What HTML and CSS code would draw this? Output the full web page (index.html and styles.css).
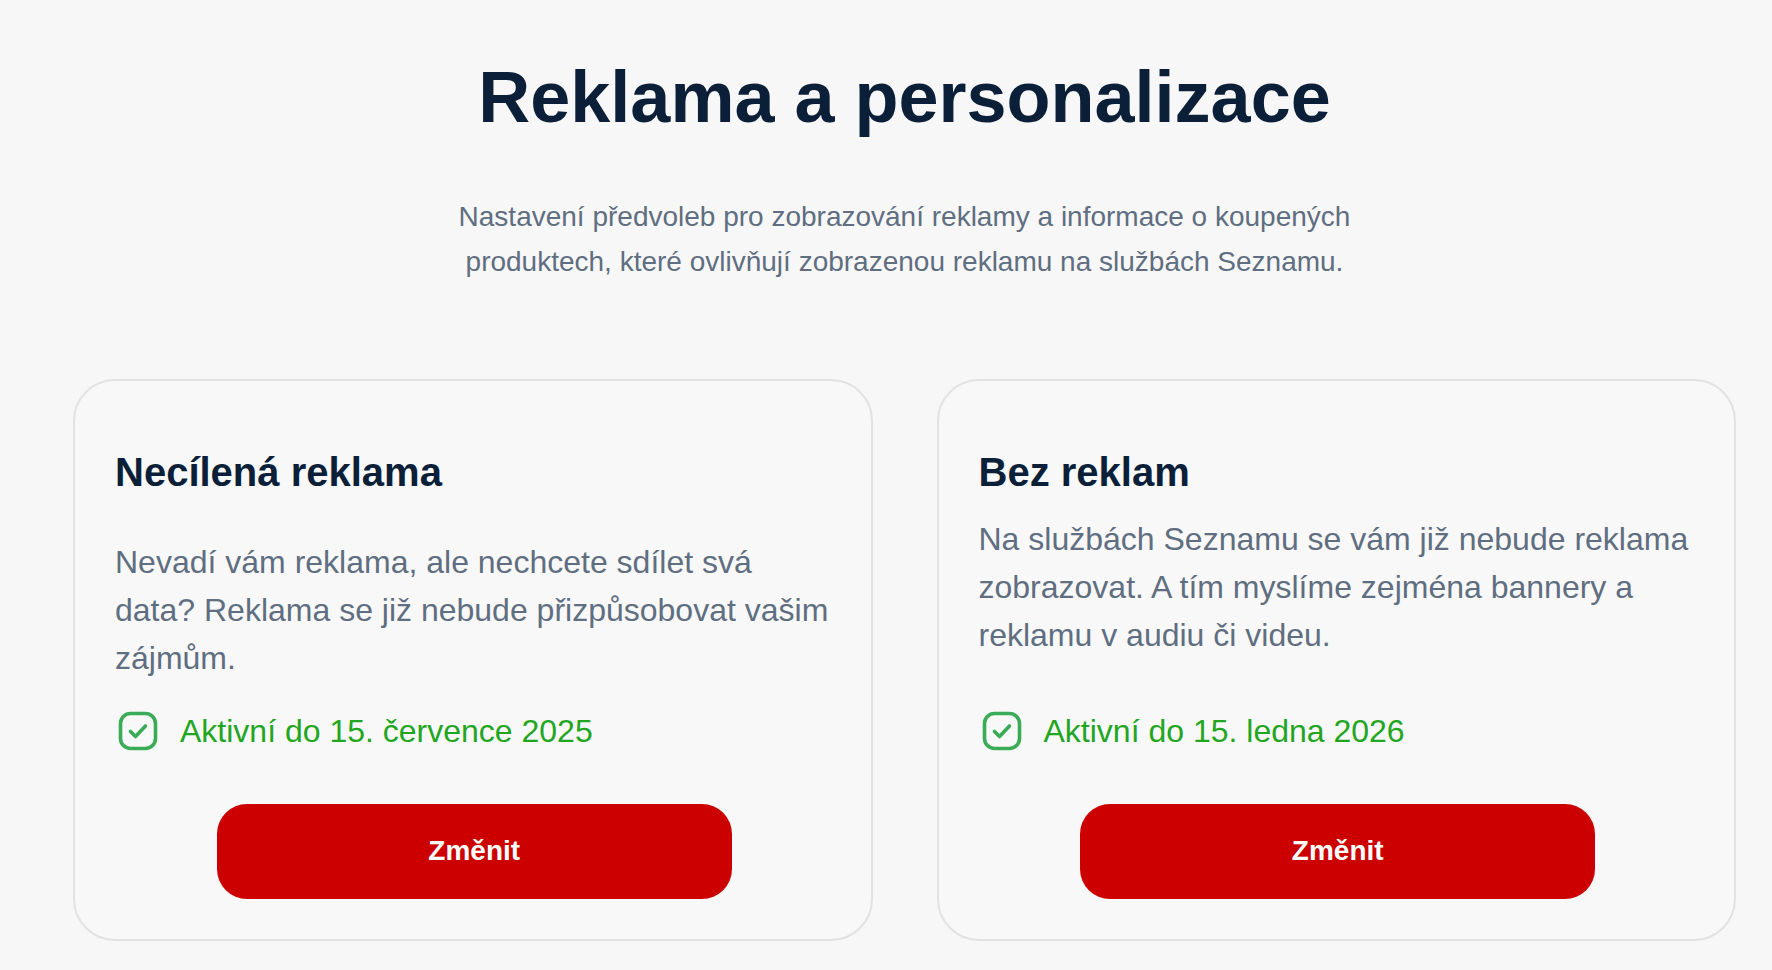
FILE: index.html
```html
<!DOCTYPE html>
<html lang="cs">
<head>
    <meta charset="UTF-8">
    <meta name="viewport" content="width=device-width, initial-scale=1.0">
    <title>Reklama a personalizace</title>
    <link rel="stylesheet" href="styles.css">
</head>
<body>
    <div class="page">
        <h1>Reklama a personalizace</h1>
        <p class="intro">Nastavení předvoleb pro zobrazování reklamy a informace o koupených produktech, které ovlivňují zobrazenou reklamu na službách Seznamu.</p>

        <div class="cards">
            <div class="card">
                <h2>Necílená reklama</h2>
                <p class="card-text">Nevadí vám reklama, ale nechcete sdílet svá data? Reklama se již nebude přizpůsobovat vašim zájmům.</p>
                <div class="status">
                    <svg class="status-icon" viewBox="0 0 40 40" width="40" height="40">
                        <rect x="2.5" y="2.5" width="35" height="35" rx="10" fill="none" stroke="#3aab56" stroke-width="3.6"/>
                        <path d="M12.5 20.5 L17.5 25.5 L27.5 15" fill="none" stroke="#3aab56" stroke-width="3.6" stroke-linecap="round" stroke-linejoin="round"/>
                    </svg>
                    <span>Aktivní do 15. července 2025</span>
                </div>
                <button type="button">Změnit</button>
            </div>

            <div class="card">
                <h2>Bez reklam</h2>
                <p class="card-text tight">Na službách Seznamu se vám již nebude reklama zobrazovat. A tím myslíme zejména bannery a reklamu v audiu či videu.</p>
                <div class="status">
                    <svg class="status-icon" viewBox="0 0 40 40" width="40" height="40">
                        <rect x="2.5" y="2.5" width="35" height="35" rx="10" fill="none" stroke="#3aab56" stroke-width="3.6"/>
                        <path d="M12.5 20.5 L17.5 25.5 L27.5 15" fill="none" stroke="#3aab56" stroke-width="3.6" stroke-linecap="round" stroke-linejoin="round"/>
                    </svg>
                    <span>Aktivní do 15. ledna 2026</span>
                </div>
                <button type="button">Změnit</button>
            </div>
        </div>
    </div>
</body>
</html>
```

FILE: styles.css
```css
body {
    margin: 0;
    font-family: "Liberation Sans", Arial, sans-serif;
    background-color: #f7f7f7;
}

.page {
    padding: 54px 36px 0 73px;
}

h1 {
    margin: 0;
    text-align: center;
    font-size: 72px;
    line-height: 1.2;
    font-weight: bold;
    color: #0b1f38;
}

.intro {
    max-width: 920px;
    margin: 55px auto 0;
    text-align: center;
    font-size: 28px;
    line-height: 1.6;
    color: #5f6e80;
}

.cards {
    display: grid;
    grid-template-columns: 1fr 1fr;
    gap: 64px;
    margin-top: 94px;
}

.card {
    display: flex;
    flex-direction: column;
    padding: 67px 37px 40px 40px;
    border: 2px solid #e2e2e2;
    border-radius: 42px;
    background-color: #f8f8f8;
}

h2 {
    margin: 0;
    font-size: 40px;
    line-height: 48px;
    font-weight: bold;
    color: #0b1f38;
}

.card-text {
    margin: 42px 0 25px;
    font-size: 32px;
    line-height: 48px;
    color: #5f6e80;
}

.card-text.tight {
    margin: 19px 0 48px;
}

.status {
    display: flex;
    align-items: center;
    gap: 22px;
    padding-left: 3px;
    font-size: 32px;
    line-height: 48px;
    color: #22a622;
}

.status-icon {
    flex-shrink: 0;
}

button {
    align-self: center;
    width: 515px;
    height: 95px;
    margin-top: 49px;
    border: none;
    border-radius: 30px;
    background-color: #cc0000;
    color: #fff;
    font-family: "Liberation Sans", Arial, sans-serif;
    font-size: 28px;
    font-weight: bold;
    cursor: pointer;
}
```
